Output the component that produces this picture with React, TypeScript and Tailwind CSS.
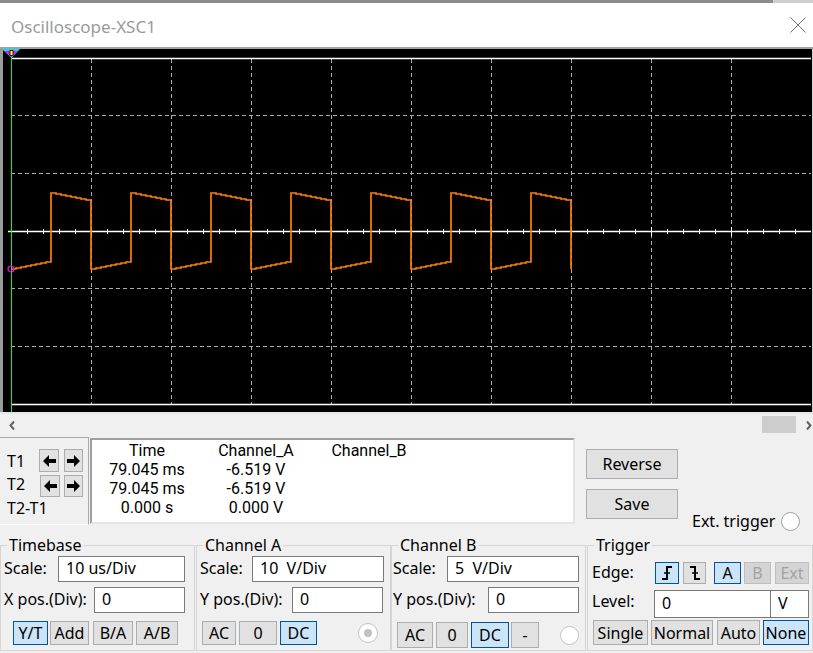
import React from "react";

type V = "normal" | "sel" | "dis";

function Btn({ children, className = "", variant = "normal" }: { children?: React.ReactNode; className?: string; variant?: V }) {
  const v =
    variant === "sel"
      ? "bg-[#cce4f7] border-[#005499] text-black"
      : variant === "dis"
      ? "bg-[#d4d4d4] border-[#bfbfbf] text-[#a3a3a3]"
      : "bg-[#e1e1e1] border-[#adadad] text-black";
  return (
    <div className={`flex shrink-0 items-center justify-center border text-[16px] leading-none ${v} ${className}`}>
      {children}
    </div>
  );
}

function Field({ children, className = "" }: { children?: React.ReactNode; className?: string }) {
  return (
    <div
      className={`flex shrink-0 items-center whitespace-pre border border-[#7a7a7a] bg-white pb-[2px] pl-[7px] text-[16px] leading-none ${className}`}
    >
      {children}
    </div>
  );
}

function ArrowBtn({ dir, className = "" }: { dir: "l" | "r"; className?: string }) {
  return (
    <div className={`flex h-full items-center justify-center border border-[#adadad] bg-[#e1e1e1] ${className}`}>
      <svg width="13" height="12" viewBox="0 0 13 12">
        {dir === "l" ? (
          <polygon points="0,6 6,0 6,4 13,4 13,8 6,8 6,12" fill="#000" />
        ) : (
          <polygon points="13,6 7,0 7,4 0,4 0,8 7,8 7,12" fill="#000" />
        )}
      </svg>
    </div>
  );
}

function wavePath(): string {
  let d = "M11 269";
  for (let i = 0; i < 8; i++) {
    const y = 269 - i;
    d += ` L${11 + 5 * i} ${y} L${16 + 5 * i} ${y}`;
  }
  for (let k = 0; k < 7; k++) {
    const r = 51 + 80 * k;
    d += ` L${r} 193`;
    for (let i = 0; i < 8; i++) {
      const y = 193 + i;
      d += ` L${r + 5 * i} ${y} L${r + 5 * i + 5} ${y}`;
    }
    const f = r + 40;
    d += ` L${f} 269`;
    if (k < 6) {
      for (let i = 0; i < 8; i++) {
        const y = 269 - i;
        d += ` L${f + 5 * i} ${y} L${f + 5 * i + 5} ${y}`;
      }
    }
  }
  return d;
}

function Scope() {
  const vx = [91, 171, 251, 331, 411, 491, 571, 651, 731];
  const hy = [115.5, 173.5, 288.5, 346.5];
  const ticks: number[] = [];
  for (let x = 27; x <= 795; x += 16) ticks.push(x);
  return (
    <svg width="809" height="363" viewBox="3 49 809 363" className="block">
      {vx.map((x) => (
        <line key={x} x1={x + 0.5} y1={59} x2={x + 0.5} y2={404} stroke="#adadad" strokeWidth="1" strokeDasharray="4 3" />
      ))}
      {hy.map((y) => (
        <line key={y} x1={11} y1={y} x2={811} y2={y} stroke="#adadad" strokeWidth="1" strokeDasharray="4 3" />
      ))}
      <line x1={11} y1={58.5} x2={811} y2={58.5} stroke="#fff" strokeWidth="1.5" />
      <line x1={11} y1={404.5} x2={811} y2={404.5} stroke="#fff" strokeWidth="1.5" />
      <line x1={8} y1={231.5} x2={811} y2={231.5} stroke="#fff" strokeWidth="1.5" />
      {ticks.map((x) => {
        const major = (x - 11) % 80 === 0;
        return (
          <line
            key={"t" + x}
            x1={x + 0.5}
            y1={major ? 227 : 229}
            x2={x + 0.5}
            y2={major ? 236 : 234}
            stroke="#fff"
            strokeWidth="1"
          />
        );
      })}
      <path d={wavePath()} fill="none" stroke="#ff8000" strokeWidth="1.7" strokeLinejoin="miter" />
      <line x1={11.5} y1={57} x2={11.5} y2={412} stroke="#00ff00" strokeWidth="1" />
      <circle cx={11} cy={269} r={3} fill="none" stroke="#ff00ff" strokeWidth="1.2" />
      <polygon points="2,49 20,49 11.5,58" fill="#00e5e5" />
      <polygon points="4.5,51 18,51 11.5,57" fill="#ff00ff" />
      <rect x={10} y={50.5} width={3} height={5} fill="#ffff00" stroke="#000" strokeWidth="0.8" />
    </svg>
  );
}

export default function App() {
  return (
    <div className="relative h-[653px] w-[813px] overflow-hidden bg-[#f0f0f0] font-['Noto_Sans',sans-serif] text-black">
      {/* top strip */}
      <div className="flex h-[3px]">
        <div className="flex-1 bg-[#8c8c8c]" />
        <div className="w-[40px] bg-[#cfcfcf]" />
      </div>
      {/* title bar */}
      <div className="flex h-[44px] items-center justify-between bg-white pl-[11px] pr-[7px]">
        <span className="pt-[3px] text-[17px] leading-[24px] text-[#9a9a9a]">Oscilloscope-XSC1</span>
        <svg width="16" height="16" viewBox="0 0 16 16">
          <path d="M0.5 0.5 L15.5 15.5 M15.5 0.5 L0.5 15.5" stroke="#707070" strokeWidth="1" />
        </svg>
      </div>
      <div className="h-[2px] bg-[#a3a3a3]" />
      {/* scope */}
      <div className="flex h-[363px] border-l-[3px] border-r border-l-[#9c9c9c] border-r-[#d0d0d0] bg-black">
        <Scope />
      </div>
      <div className="h-[2px] bg-[#e6e6e6]" />
      {/* scrollbar */}
      <div className="flex h-[23px] items-center pl-[9px] pr-[1px]">
        <svg width="6" height="9" viewBox="0 0 6 9">
          <polyline points="5,0.5 1.5,4.5 5,8.5" fill="none" stroke="#606060" strokeWidth="2" />
        </svg>
        <div className="flex-1" />
        <div className="mb-[2px] mr-[10px] h-[17px] w-[34px] bg-[#cdcdcd]" />
        <svg width="6" height="9" viewBox="0 0 6 9">
          <polyline points="1,0.5 4.5,4.5 1,8.5" fill="none" stroke="#606060" strokeWidth="2" />
        </svg>
      </div>
      {/* cursor row */}
      <div className="flex h-[88px] items-start">
        <div className="h-[88px] w-[89px] border-r border-t border-b border-r-[#a9a9a9] border-t-[#a9a9a9] border-b-white pl-[7px] pt-[11px] text-[16px]">
          <div className="flex h-[23px] items-center">
            <span className="w-[32px] leading-[20px]">T1</span>
            <ArrowBtn dir="l" className="w-[20px]" />
            <ArrowBtn dir="r" className="ml-[5px] w-[19px]" />
          </div>
          <div className="mt-[3px] flex h-[22px] items-center">
            <span className="w-[33px] pb-[4px] leading-[20px]">T2</span>
            <ArrowBtn dir="l" className="w-[20px]" />
            <ArrowBtn dir="r" className="ml-[4px] w-[19px]" />
          </div>
          <div className="mt-[1px] leading-[20px]">T2-T1</div>
        </div>
        <div className="ml-[1px] mt-[1px] h-[86px] w-[485px] border-2 border-b-[#e3e3e3] border-l-[#a0a0a0] border-r-[#e3e3e3] border-t-[#a0a0a0] bg-white pt-[1px] font-['Roboto',sans-serif] text-[16px]">
          <div className="grid grid-cols-[110px_108px_118px] text-center leading-[19px]">
            <span>Time</span>
            <span>Channel_A</span>
            <span>Channel_B</span>
            <span>79.045 ms</span>
            <span>-6.519 V</span>
            <span></span>
            <span>79.045 ms</span>
            <span>-6.519 V</span>
            <span></span>
            <span>0.000 s</span>
            <span>0.000 V</span>
            <span></span>
          </div>
        </div>
        <div className="ml-[11px] flex flex-col pt-[12px]">
          <Btn className="h-[30px] w-[92px]">Reverse</Btn>
          <div className="mt-[10px] flex items-start">
            <Btn className="h-[30px] w-[92px]">Save</Btn>
            <div className="ml-[14px] mt-[22px] flex items-center gap-[6px]">
              <span className="text-[16px] leading-[20px]">Ext. trigger</span>
              <div className="h-[19px] w-[19px] rounded-full border border-[#a0a0a0] bg-white" />
            </div>
          </div>
        </div>
      </div>
      {/* groups */}
      <div className="mt-[10px] flex text-[16px]">
        <fieldset className="h-[116px] w-[195px] border border-[#d5d5d5]">
          <legend className="ml-[6px] px-[2px] leading-[20px]">Timebase</legend>
          <div className="mt-[1px] flex h-[26px] items-center pl-[3px]">
            <span className="flex-1 pb-[2px]">Scale:</span>
            <Field className="mr-[9px] h-[26px] w-[127px]">10 us/Div</Field>
          </div>
          <div className="mt-[5px] flex h-[26px] items-center pl-[3px]">
            <span className="flex-1 pb-[2px]">X pos.(Div):</span>
            <Field className="mr-[9px] h-[26px] w-[91px]">0</Field>
          </div>
          <div className="mt-[8px] flex h-[24px] pl-[12px]">
            <Btn variant="sel" className="w-[35px]">Y/T</Btn>
            <Btn className="ml-[2px] w-[39px]">Add</Btn>
            <Btn className="ml-[4px] w-[40px]">B/A</Btn>
            <Btn className="ml-[3px] w-[42px]">A/B</Btn>
          </div>
        </fieldset>
        <fieldset className="ml-[1px] h-[116px] w-[195px] border border-[#d5d5d5]">
          <legend className="ml-[6px] px-[2px] leading-[20px]">Channel A</legend>
          <div className="mt-[1px] flex h-[26px] items-center pl-[3px]">
            <span className="flex-1 pb-[2px]">Scale:</span>
            <Field className="mr-[6px] h-[26px] w-[132px]">{"10\u00a0\u00a0V/Div"}</Field>
          </div>
          <div className="mt-[5px] flex h-[26px] items-center pl-[3px]">
            <span className="flex-1 pb-[2px]">Y pos.(Div):</span>
            <Field className="mr-[7px] h-[26px] w-[91px]">0</Field>
          </div>
          <div className="mt-[8px] flex h-[24px] items-center pl-[5px]">
            <Btn className="h-[24px] w-[34px]">AC</Btn>
            <Btn className="ml-[3px] h-[24px] w-[38px]">0</Btn>
            <Btn variant="sel" className="ml-[3px] h-[24px] w-[37px]">DC</Btn>
            <div className="ml-auto mr-[12px] flex h-[20px] w-[20px] items-center justify-center rounded-full border border-[#c4c4c4] bg-white">
              <div className="h-[8px] w-[8px] rounded-full bg-[#c2c2c2]" />
            </div>
          </div>
        </fieldset>
        <fieldset className="h-[116px] w-[195px] border border-[#d5d5d5]">
          <legend className="ml-[6px] px-[2px] leading-[20px]">Channel B</legend>
          <div className="mt-[1px] flex h-[26px] items-center pl-[1px]">
            <span className="flex-1 pb-[2px]">Scale:</span>
            <Field className="mr-[6px] h-[26px] w-[132px]">{"5\u00a0\u00a0V/Div"}</Field>
          </div>
          <div className="mt-[5px] flex h-[26px] items-center pl-[1px]">
            <span className="flex-1 pb-[2px]">Y pos.(Div):</span>
            <Field className="mr-[6px] h-[26px] w-[91px]">0</Field>
          </div>
          <div className="mt-[9px] flex h-[26px] items-center pl-[5px]">
            <Btn className="h-[26px] w-[36px]">AC</Btn>
            <Btn className="ml-[3px] h-[26px] w-[32px]">0</Btn>
            <Btn variant="sel" className="ml-[3px] h-[26px] w-[38px]">DC</Btn>
            <Btn className="ml-[2px] h-[26px] w-[28px]">-</Btn>
            <div className="ml-auto mr-[6px] h-[19px] w-[19px] rounded-full border border-[#c4c4c4] bg-white" />
          </div>
        </fieldset>
        <fieldset className="ml-[1px] h-[116px] w-[226px] border border-[#d5d5d5]">
          <legend className="ml-[6px] px-[2px] leading-[20px]">Trigger</legend>
          <div className="mt-[7px] flex h-[22px] items-center pl-[4px]">
            <span className="w-[63px] pb-[2px]">Edge:</span>
            <Btn variant="sel" className="h-[22px] w-[24px]">
              <svg width="14" height="16" viewBox="0 0 14 16">
                <path d="M2 14 H7 V2 H12" fill="none" stroke="#000" strokeWidth="2" />
                <path d="M4 8 H10" fill="none" stroke="#000" strokeWidth="1.5" />
              </svg>
            </Btn>
            <Btn className="ml-[4px] h-[22px] w-[23px]">
              <svg width="14" height="16" viewBox="0 0 14 16">
                <path d="M2 2 H7 V14 H12" fill="none" stroke="#000" strokeWidth="2" />
                <path d="M4 8 H10" fill="none" stroke="#000" strokeWidth="1.5" />
              </svg>
            </Btn>
            <Btn variant="sel" className="ml-[8px] h-[22px] w-[27px]">A</Btn>
            <Btn variant="dis" className="ml-[3px] h-[22px] w-[27px]">B</Btn>
            <Btn variant="dis" className="ml-[4px] h-[22px] w-[34px]">Ext</Btn>
          </div>
          <div className="mt-[6px] flex h-[28px] items-center pl-[4px]">
            <span className="w-[62px] pb-[6px]">Level:</span>
            <Field className="h-[28px] w-[117px]">0</Field>
            <Field className="-ml-px h-[28px] w-[39px]">V</Field>
          </div>
          <div className="mt-[2px] flex h-[25px] pl-[5px]">
            <Btn className="w-[55px]">Single</Btn>
            <Btn className="ml-[3px] w-[62px]">Normal</Btn>
            <Btn className="ml-[4px] w-[43px]">Auto</Btn>
            <Btn variant="sel" className="ml-[3px] w-[46px]">None</Btn>
          </div>
        </fieldset>
      </div>
    </div>
  );
}
